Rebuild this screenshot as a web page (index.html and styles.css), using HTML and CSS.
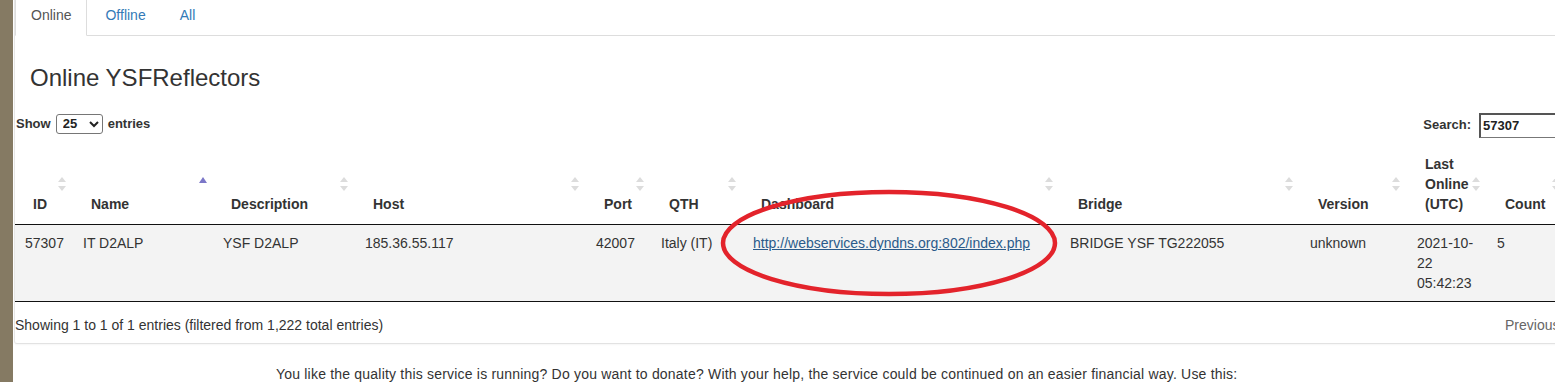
FILE: index.html
```html
<!DOCTYPE html>
<html lang="en">
<head>
<meta charset="UTF-8">
<meta name="viewport" content="width=device-width, initial-scale=1.0">
<title>Online YSFReflectors</title>
<link rel="stylesheet" href="styles.css">
</head>
<body>

<div class="sidebar"></div>

<div class="page">
    <div class="card">
        <ul class="nav-tabs">
            <li class="active"><a href="#">Online</a></li>
            <li><a href="#">Offline</a></li>
            <li><a href="#">All</a></li>
        </ul>

        <div class="tab-pane">
            <h3 class="pane-title">Online YSFReflectors</h3>

            <div class="dt-wrapper">
                <div class="dt-top">
                    <label class="dt-length">Show
                        <select><option>25</option><option>50</option><option>100</option></select>
                        entries</label>
                    <label class="dt-filter">Search: <input type="search" value="57307"></label>
                </div>

                <table class="dt-table">
                    <colgroup>
                        <col style="width: 58px">
                        <col style="width: 140px">
                        <col style="width: 142px">
                        <col style="width: 231px">
                        <col style="width: 65px">
                        <col style="width: 92px">
                        <col style="width: 317px">
                        <col style="width: 240px">
                        <col style="width: 107px">
                        <col style="width: 80px">
                        <col style="width: 80px">
                    </colgroup>
                    <thead>
                        <tr>
                            <th class="sorting">ID</th>
                            <th class="sorting-asc">Name</th>
                            <th class="sorting">Description</th>
                            <th class="sorting">Host</th>
                            <th class="sorting">Port</th>
                            <th class="sorting">QTH</th>
                            <th class="sorting">Dashboard</th>
                            <th class="sorting">Bridge</th>
                            <th class="sorting">Version</th>
                            <th class="sorting">Last Online (UTC)</th>
                            <th class="sorting">Count</th>
                        </tr>
                    </thead>
                    <tbody>
                        <tr class="odd">
                            <td>57307</td>
                            <td>IT D2ALP</td>
                            <td>YSF D2ALP</td>
                            <td>185.36.55.117</td>
                            <td>42007</td>
                            <td>Italy (IT)</td>
                            <td><a href="#">http://webservices.dyndns.org:802/index.php</a></td>
                            <td>BRIDGE YSF TG222055</td>
                            <td>unknown</td>
                            <td>2021-10-22 05:42:23</td>
                            <td>5</td>
                        </tr>
                    </tbody>
                </table>

                <div class="dt-bottom">
                    <div class="dt-info">Showing 1 to 1 of 1 entries (filtered from 1,222 total entries)</div>
                    <div class="dt-paginate">
                        <span class="paginate-button disabled">Previous</span>
                    </div>
                </div>
            </div>
        </div>
    </div>

    <p class="donate">You like the quality this service is running? Do you want to donate? With your help, the service could be continued on an easier financial way. Use this:</p>
</div>

<!-- red marker somebody drew round the dashboard link -->
<svg class="marker" width="350" height="120" viewBox="0 0 350 120">
    <ellipse cx="169" cy="55" rx="166" ry="51" fill="none" stroke="#e3232b" stroke-width="4.5"/>
</svg>

</body>
</html>
```

FILE: styles.css
```css
html, body {
    margin: 0;
    padding: 0;
    height: 100%;
    overflow: hidden;
    background-color: #fff;
    font-family: "Liberation Sans", Arial, sans-serif;
    font-size: 14px;
    line-height: 20px;
    color: #333;
}

body {
    display: flex;
    position: relative;
}

.sidebar {
    flex: 0 0 13px;
    background-color: #857a63;
}

.page {
    flex: none;
    width: 1640px;
    padding-left: 1px;
}

.card {
    border-left: 1px solid #e6e6e6;
    border-bottom: 1px solid #e2e2e2;
    border-bottom-left-radius: 3px;
    box-shadow: 0 1px 2px rgba(0, 0, 0, 0.04);
    padding-bottom: 8px;
}

/* tabs */
.nav-tabs {
    list-style: none;
    display: flex;
    margin: -6px 0 0;
    padding: 0;
    border-bottom: 1px solid #ddd;
}

.nav-tabs li {
    margin: 0 2px -1px 0;
}

.nav-tabs a {
    display: block;
    padding: 10px 15px;
    border: 1px solid transparent;
    border-radius: 4px 4px 0 0;
    color: #337ab7;
    text-decoration: none;
}

.nav-tabs li.active a {
    color: #555;
    background-color: #fff;
    border-color: #ddd #ddd transparent;
}

.pane-title {
    margin: 29px 0 22px 15px;
    font-size: 24px;
    font-weight: normal;
    line-height: 26px;
}

/* datatable */
.dt-wrapper {
    width: 1552px;
}

.dt-top {
    display: flex;
    justify-content: space-between;
    align-items: flex-start;
    font-size: 13px;
    font-weight: bold;
}

.dt-length, .dt-filter {
    display: flex;
    align-items: center;
    gap: 4px;
}

.dt-length {
    height: 21px;
    padding-left: 1px;
}

.dt-length select {
    width: 47px;
    height: 20px;
    margin: 0 1px;
    padding: 0 0 0 2px;
    border: 1px solid #767676;
    border-radius: 3px;
    background-color: #fff;
    font-family: inherit;
    font-size: 13px;
    font-weight: bold;
    color: #222;
}

.dt-filter {
    height: 24px;
    gap: 8px;
}

.dt-filter input {
    box-sizing: border-box;
    width: 88px;
    height: 25px;
    padding: 0 2px;
    border-style: solid;
    border-width: 2px 1px 1px 2px;
    border-color: #555 #888 #777 #555;
    font-family: inherit;
    font-size: 13px;
    font-weight: bold;
    color: #222;
}

.dt-table {
    width: 1552px;
    margin-top: 7px;
    table-layout: fixed;
    border-collapse: separate;
    border-spacing: 0;
    border-bottom: 1px solid #111;
}

.dt-table th {
    position: relative;
    padding: 10px 18px;
    text-align: left;
    vertical-align: bottom;
    font-weight: bold;
    border-bottom: 1px solid #111;
}

.sorting::before, .sorting::after, .sorting-asc::before {
    content: "";
    position: absolute;
    top: 50%;
    right: 7px;
    border-left: 4px solid transparent;
    border-right: 4px solid transparent;
}

.sorting::before {
    margin-top: -7px;
    border-bottom: 5px solid #dcdcdc;
}

.sorting::after {
    margin-top: 2px;
    border-top: 5px solid #dcdcdc;
}

.sorting-asc::before {
    right: 6px;
    margin-top: -7px;
    border-left-width: 4.5px;
    border-right-width: 4.5px;
    border-bottom: 6px solid #7b77c8;
}

.dt-table td {
    padding: 8px 10px;
    vertical-align: top;
    background-color: #f3f3f3;
}

.dt-table td a {
    color: #2a5a8a;
}

.dt-bottom {
    display: grid;
    grid-template-columns: 1fr 76px;
    padding-top: 13px;
}

.dt-paginate {
    white-space: nowrap;
}

.paginate-button {
    padding: 0 14px;
    color: #666;
}

.donate {
    margin: 20px 0 0;
    padding-left: 262px;
    font-size: 14px;
    letter-spacing: 0.2px;
}

.marker {
    position: absolute;
    left: 720px;
    top: 188px;
}
```
